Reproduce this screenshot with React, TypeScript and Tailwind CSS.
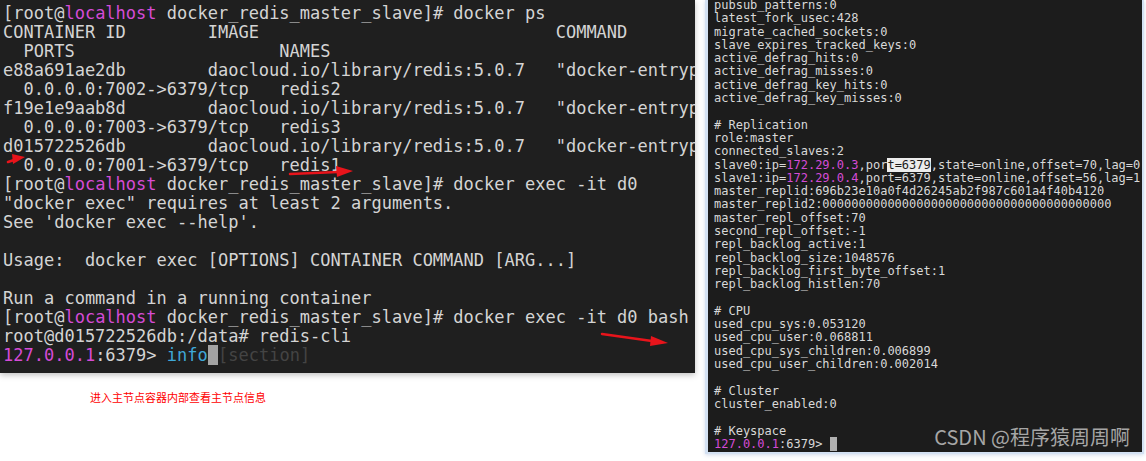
import React from "react";

const mono = { fontFamily: '"DejaVu Sans Mono", "Liberation Mono", monospace' };

const Prompt = ({ cmd }: { cmd: string }) => (
  <div>
    [root@<span className="text-[#d54bd6]">localhost</span> docker_redis_master_slave]# {cmd}
  </div>
);

const leftRows = [
  "CONTAINER ID        IMAGE                             COMMAND",
  "  PORTS                    NAMES",
  'e88a691ae2db        daocloud.io/library/redis:5.0.7   "docker-entrypoint.s…"',
  "  0.0.0.0:7002->6379/tcp   redis2",
  'f19e1e9aab8d        daocloud.io/library/redis:5.0.7   "docker-entrypoint.s…"',
  "  0.0.0.0:7003->6379/tcp   redis3",
  'd015722526db        daocloud.io/library/redis:5.0.7   "docker-entrypoint.s…"',
  "  0.0.0.0:7001->6379/tcp   redis1",
];

const infoTop = [
  "pubsub_patterns:0",
  "latest_fork_usec:428",
  "migrate_cached_sockets:0",
  "slave_expires_tracked_keys:0",
  "active_defrag_hits:0",
  "active_defrag_misses:0",
  "active_defrag_key_hits:0",
  "active_defrag_key_misses:0",
  "",
  "# Replication",
  "role:master",
  "connected_slaves:2",
];

const infoMid = [
  "master_replid:696b23e10a0f4d26245ab2f987c601a4f40b4120",
  "master_replid2:0000000000000000000000000000000000000000",
  "master_repl_offset:70",
  "second_repl_offset:-1",
  "repl_backlog_active:1",
  "repl_backlog_size:1048576",
  "repl_backlog_first_byte_offset:1",
  "repl_backlog_histlen:70",
  "",
  "# CPU",
  "used_cpu_sys:0.053120",
  "used_cpu_user:0.068811",
  "used_cpu_sys_children:0.006899",
  "used_cpu_user_children:0.002014",
  "",
  "# Cluster",
  "cluster_enabled:0",
  "",
  "# Keyspace",
];

export default function App() {
  return (
    <div className="w-[1146px] h-[461px] bg-white flex overflow-hidden">
      {/* left: docker ps session */}
      <div className="w-[695px] flex flex-col shrink-0">
        <div className="relative h-[373px] bg-[#1f1f1f] overflow-hidden shadow-[0_2px_6px_rgba(0,0,0,0.25)]">
          <div
            className="pt-[4px] pl-[3px] text-[17px] leading-[19px] text-[#d4d4d4] whitespace-pre"
            style={mono}
          >
            <Prompt cmd="docker ps" />
            {leftRows.map((r, i) => (
              <div key={i}>{r}</div>
            ))}
            <Prompt cmd="docker exec -it d0" />
            <div>"docker exec" requires at least 2 arguments.</div>
            <div>See 'docker exec --help'.</div>
            <div>&nbsp;</div>
            <div>Usage:  docker exec [OPTIONS] CONTAINER COMMAND [ARG...]</div>
            <div>&nbsp;</div>
            <div>Run a command in a running container</div>
            <Prompt cmd="docker exec -it d0 bash" />
            <div>root@d015722526db:/data# redis-cli</div>
            <div>
              <span className="text-[#d54bd6]">127.0.0.1</span>:6379&gt;{" "}
              <span className="text-[#3fa8d8]">info</span>
              <span className="bg-[#a3a3a3]"> </span>
              <span className="text-[#444444]">[section]</span>
            </div>
          </div>
          <svg className="absolute inset-0 pointer-events-none" width="695" height="373">
            <g fill="#e8141b" stroke="#e8141b" strokeWidth="2.5" strokeLinecap="round">
              <line x1="8" y1="162" x2="14" y2="160" />
              <polygon points="12,154 25,157 13,164" stroke="none" />
              <line x1="290" y1="174" x2="338" y2="172" />
              <polygon points="336,166 353,171 337,177" stroke="none" />
              <line x1="602" y1="334" x2="652" y2="341" />
              <polygon points="651,336 668,343 650,346" stroke="none" />
            </g>
          </svg>
        </div>
        <div
          className="mt-[17px] pl-[90px] text-[11px] leading-[14px] text-[#ff0000]"
          style={{ fontFamily: '"Noto Sans CJK SC", "Noto Sans", sans-serif' }}
        >
          进入主节点容器内部查看主节点信息
        </div>
      </div>

      {/* right: redis info output */}
      <div className="ml-[10px] w-[439px] h-[454px] shrink-0 border-l-[3px] border-r-[2px] border-b-[2px] border-[#d3e1f3] shadow-[0_1px_4px_rgba(120,150,200,0.35)] relative">
        <div className="h-full bg-[#1c1c1c] overflow-hidden pl-[6px]">
          <div
            className="mt-[-1px] text-[12px] leading-[13.3px] text-[#d8d8d8] whitespace-pre"
            style={mono}
          >
            {infoTop.map((r, i) => (
              <div key={i}>{r || "\u00a0"}</div>
            ))}
            <div>
              slave0:ip=<span className="text-[#d54bd6]">172.29.0.3</span>,por
              <span className="bg-[#ececec] text-[#1c1c1c]">t=6379</span>
              ,state=online,offset=70,lag=0
            </div>
            <div>
              slave1:ip=<span className="text-[#d54bd6]">172.29.0.4</span>,port=6379,state=online,offset=56,lag=1
            </div>
            {infoMid.map((r, i) => (
              <div key={i}>{r || "\u00a0"}</div>
            ))}
            <div>
              <span className="text-[#d54bd6]">127.0.0.1</span>:6379&gt;{" "}
              <span className="bg-[#b0b0b0]"> </span>
            </div>
          </div>
        </div>
        <div
          className="absolute right-[12px] bottom-[4px] text-[20px] leading-[22px] text-[#a6a6a6]"
          style={{ fontFamily: '"Noto Sans CJK SC", "Noto Sans", sans-serif' }}
        >
          CSDN @程序猿周周啊
        </div>
      </div>
    </div>
  );
}
